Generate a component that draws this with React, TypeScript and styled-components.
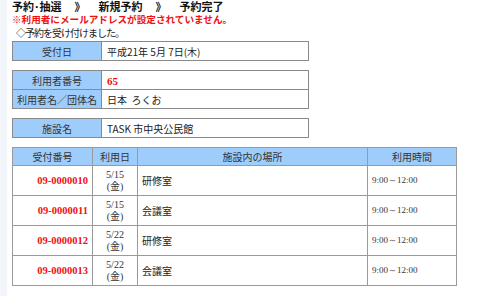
import styled, { createGlobalStyle } from 'styled-components';

const GlobalStyle = createGlobalStyle`
  body {
    margin: 0;
    background: linear-gradient(to right, #f2f6fb 7px, #fff 7px);
    font-family: "Noto Sans CJK JP", "DejaVu Sans", sans-serif;
    color: #222;
  }
`;

type Reservation = {
  no: string;
  date: string;
  place: string;
  time: string;
};

const reservations: Reservation[] = [
  { no: '09-0000010', date: '5/15', place: '研修室', time: '9:00～12:00' },
  { no: '09-0000011', date: '5/15', place: '会議室', time: '9:00～12:00' },
  { no: '09-0000012', date: '5/22', place: '研修室', time: '9:00～12:00' },
  { no: '09-0000013', date: '5/22', place: '会議室', time: '9:00～12:00' },
];

const crumbs = ['予約･抽選', '新規予約', '予約完了'];

function App() {
  return (
    <Page>
      <GlobalStyle />
      <Breadcrumb>
        {crumbs.map((c, i) => (
          <span key={c}>
            {i > 0 && <Sep>》</Sep>}
            {c}
          </span>
        ))}
      </Breadcrumb>
      <Warning>※利用者にメールアドレスが設定されていません。</Warning>
      <Notice>◇予約を受け付けました。</Notice>

      <InfoTable>
        <tbody>
          <tr>
            <Label>受付日</Label>
            <Value>平成21年 5月 7日(木)</Value>
          </tr>
        </tbody>
      </InfoTable>

      <InfoTable>
        <tbody>
          <tr>
            <Label>利用者番号</Label>
            <Value>
              <RedNum>65</RedNum>
            </Value>
          </tr>
          <tr>
            <Label>利用者名／団体名</Label>
            <Value>日本&nbsp; ろくお</Value>
          </tr>
        </tbody>
      </InfoTable>

      <InfoTable>
        <tbody>
          <tr>
            <Label>施設名</Label>
            <Value>TASK 市中央公民館</Value>
          </tr>
        </tbody>
      </InfoTable>

      <ListTable>
        <colgroup>
          <col style={{ width: 80 }} />
          <col style={{ width: 45 }} />
          <col style={{ width: 230 }} />
          <col style={{ width: 89 }} />
        </colgroup>
        <thead>
          <tr>
            <Head>受付番号</Head>
            <Head>利用日</Head>
            <Head>施設内の場所</Head>
            <Head>利用時間</Head>
          </tr>
        </thead>
        <tbody>
          {reservations.map((r) => (
            <tr key={r.no}>
              <NoCell>{r.no}</NoCell>
              <DateCell>
                {r.date}
                <br />
                (金)
              </DateCell>
              <PlaceCell>{r.place}</PlaceCell>
              <TimeCell>{r.time}</TimeCell>
            </tr>
          ))}
        </tbody>
      </ListTable>
    </Page>
  );
}

const Page = styled.div`
  padding: 0 0 0 12px;
  width: 444px;
`;

const Breadcrumb = styled.div`
  font-size: 11px;
  font-weight: bold;
  line-height: 13px;
  color: #111;
  white-space: nowrap;
`;

const Sep = styled.span`
  margin: 0 13px;
`;

const Warning = styled.div`
  font-size: 9.6px;
  font-weight: bold;
  line-height: 12px;
  color: #f01010;
  white-space: nowrap;
`;

const Notice = styled.div`
  font-size: 10px;
  line-height: 13px;
  letter-spacing: -1px;
  margin: 1px 0 2px 4px;
  white-space: nowrap;
`;

const InfoTable = styled.table`
  border-collapse: collapse;
  width: 297px;
  margin-bottom: 9px;
  border: 1px solid #7a7a7a;
  font-size: 10px;
`;

const Label = styled.td`
  width: 88px;
  height: 18px;
  padding: 0;
  background: #9fcdfb;
  border: 1px solid #8a8a8a;
  text-align: center;
  white-space: nowrap;
  color: #333;
`;

const Value = styled.td`
  padding: 0 0 0 5px;
  height: 18px;
  border: 1px solid #8a8a8a;
  border-left-color: #b0b0b0;
  background: #fff;
  white-space: nowrap;
`;

const RedNum = styled.span`
  font-family: "Liberation Serif", serif;
  font-weight: bold;
  font-size: 11px;
  color: #f01010;
`;

const ListTable = styled.table`
  border-collapse: collapse;
  table-layout: fixed;
  width: 445px;
  border: 1px solid #707070;
  font-size: 10px;
`;

const Head = styled.th`
  height: 17px;
  padding: 0;
  background: #9fcdfb;
  border: 1px solid #9a9a9a;
  font-weight: normal;
  color: #333;
  text-align: center;
`;

const BodyCell = styled.td`
  height: 29px;
  padding: 0;
  border: 1px solid #9a9a9a;
  background: #fff;
`;

const NoCell = styled(BodyCell)`
  text-align: right;
  padding-right: 4px;
  font-family: "Liberation Serif", serif;
  font-weight: bold;
  font-size: 10.5px;
  color: #f01010;
`;

const DateCell = styled(BodyCell)`
  text-align: center;
  font-family: "Liberation Serif", "Noto Sans CJK JP", serif;
  font-size: 10px;
  line-height: 12px;
  color: #333;
`;

const PlaceCell = styled(BodyCell)`
  padding-left: 4px;
`;

const TimeCell = styled(BodyCell)`
  padding-left: 4px;
  font-family: "Liberation Serif", serif;
  font-size: 9px;
  color: #333;
`;

export default App;
